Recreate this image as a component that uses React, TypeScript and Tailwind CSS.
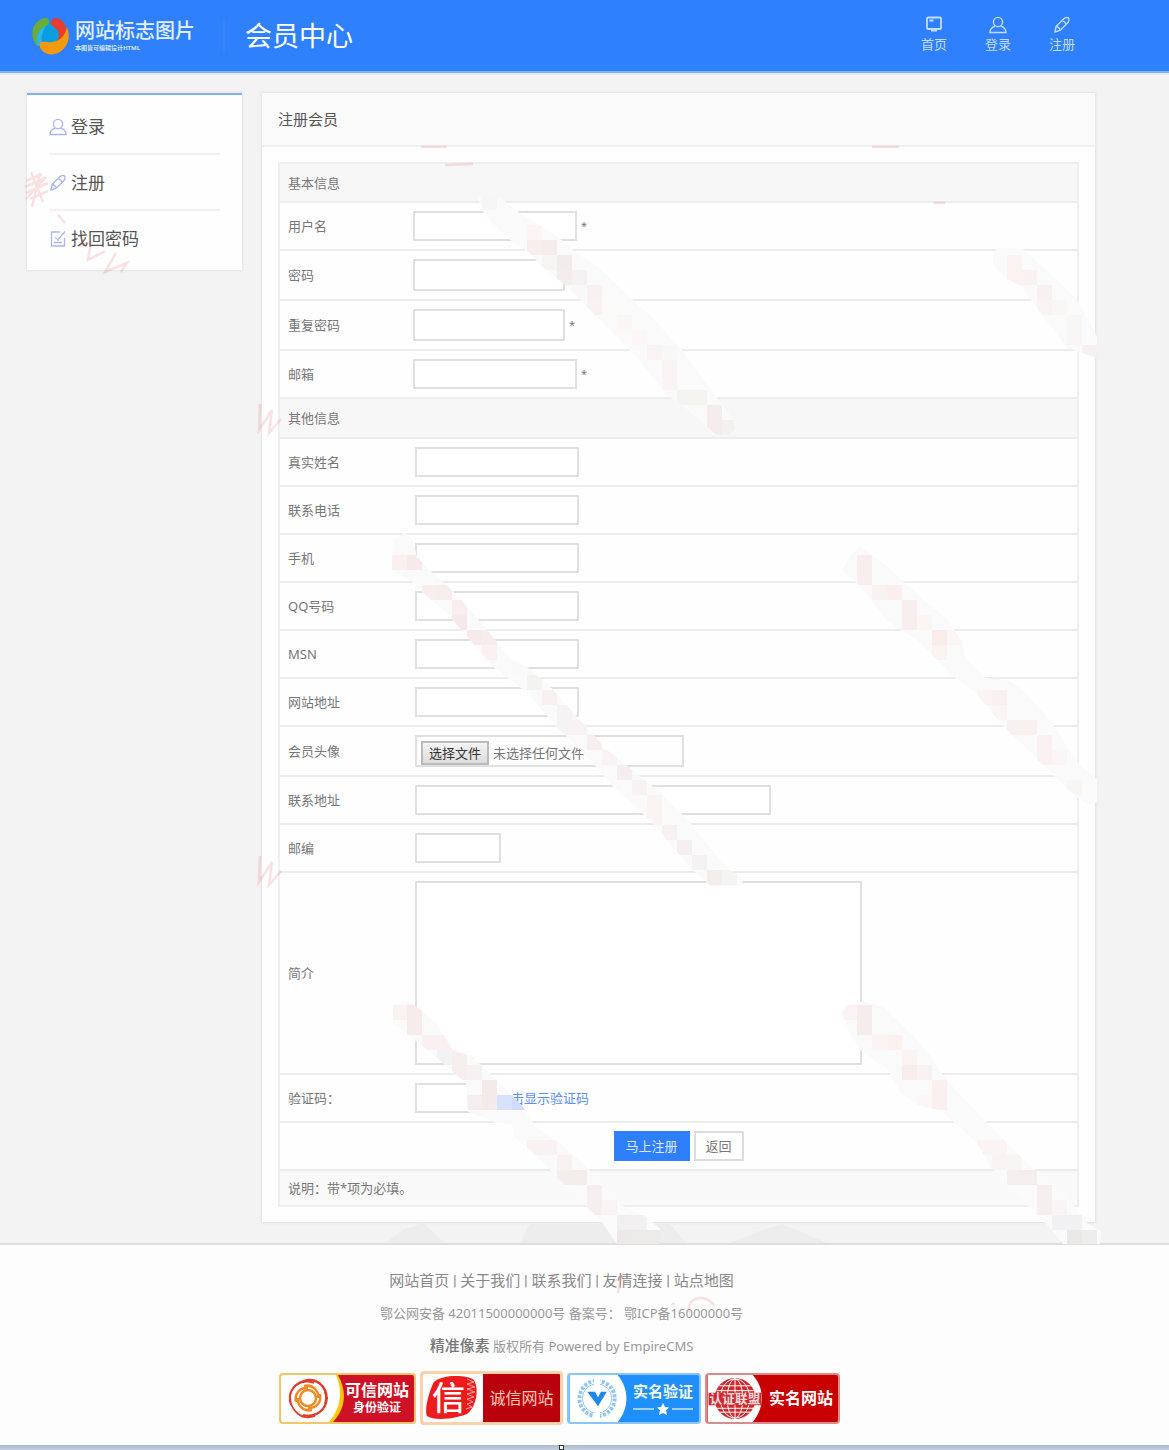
import type { ReactNode } from "react";

type IconProps = { className?: string };

const navLinks = [
  { label: "首页", icon: MonitorIcon },
  { label: "登录", icon: UserIcon },
  { label: "注册", icon: PenIcon },
];

const sideLinks = [
  { label: "登录", icon: UserIcon },
  { label: "注册", icon: PenIcon },
  { label: "找回密码", icon: NoteIcon },
];

const accountFields = [
  { id: "username", label: "用户名", type: "text", row: "h-12", input: "w-[164px] h-[30px]", required: true },
  { id: "password", label: "密码", type: "password", row: "h-[50px]", input: "w-[152px] h-8", required: false },
  { id: "repassword", label: "重复密码", type: "password", row: "h-[50px]", input: "w-[152px] h-8", required: true },
  { id: "email", label: "邮箱", type: "text", row: "h-12", input: "w-[164px] h-[30px]", required: true },
];

const contactFields = [
  { id: "truename", label: "真实姓名" },
  { id: "call", label: "联系电话" },
  { id: "phone", label: "手机" },
  { id: "oicq", label: "QQ号码" },
  { id: "msn", label: "MSN" },
  { id: "homepage", label: "网站地址" },
];

const footerLinks = ["网站首页", "关于我们", "联系我们", "友情连接", "站点地图"];

const inputBase = "block border-2 border-[#e0e0e0] bg-white px-1 text-[13px] outline-none";

function MonitorIcon({ className }: IconProps) {
  return (
    <svg viewBox="0 0 18 18" fill="none" stroke="currentColor" strokeWidth="1.8" className={className}>
      <rect x="2" y="1.500" width="14" height="11.500" rx="1" />
      <path d="M4.500 4.500h4M7.500 13v2M10.500 13v2M6 14.500h6" />
    </svg>
  );
}

function UserIcon({ className }: IconProps) {
  return (
    <svg viewBox="0 0 18 18" fill="none" stroke="currentColor" strokeWidth="1.4" className={className}>
      <circle cx="9" cy="6" r="4.6" />
      <path d="M6.2 10.2C3 11.2 1 13 1 16.500h16c0-3.500-2-5.300-5.200-6.300" />
    </svg>
  );
}

function PenIcon({ className }: IconProps) {
  return (
    <svg viewBox="0 0 18 18" fill="none" stroke="currentColor" strokeWidth="1.4" className={className}>
      <path d="M2 16l1-5.500 7.500-7.500c1.500-1.500 4-2 5-1s.5 3.500-1 5L7 14.500z" />
      <path d="M3 10.500c2 0 4 2 4 4M9.500 5c1.500.3 3 1.500 3.500 3" />
    </svg>
  );
}

function NoteIcon({ className }: IconProps) {
  return (
    <svg viewBox="0 0 18 18" fill="none" stroke="currentColor" strokeWidth="1.3" className={className}>
      <path d="M11 2H2.500v14h13V8" />
      <path d="M16 1.500l-7 8-3-2M5 12.500h8M9 9.500v1.500" />
    </svg>
  );
}

function LogoMark() {
  return (
    <svg viewBox="0 0 38 38" className="h-[38px] w-[38px]">
      <circle cx="18" cy="18" r="12" fill="#0a9de0" />
      <path d="M5 29C-4 18 1 3 13 1c5-1 6 6 1 8C7 12 4 18 6 28z" fill="#6aad35" />
      <path d="M6 29C3 20 6 12 14 9c-4 7-6 12-3 19z" fill="#29b7ee" />
      <path d="M19 5c1-5 7-5 11-1 7 7 6 15 1 21l-7 1c4-6 4-12-2-16-2-1-4-3-3-5z" fill="#e83c2c" />
      <path d="M8 26c4-3 7 0 12-1 8-1 13-6 15-15 5 12-1 24-12 27-8 2-17-4-15-11z" fill="#f39a0c" />
    </svg>
  );
}

function SectionRow({ children, className }: { children: ReactNode; className: string }) {
  return (
    <tr>
      <th
        colSpan={2}
        className={`border-b-2 border-[#ececec] bg-[#f7f7f7] pl-2 text-left font-normal ${className}`}
      >
        {children}
      </th>
    </tr>
  );
}

function FieldRow({ id, label, className = "h-12", children }: { id: string; label: string; className?: string; children: ReactNode }) {
  return (
    <tr>
      <td className={`border-b-2 border-[#ececec] pl-2 ${className}`}>
        <label htmlFor={id}>{label}</label>
      </td>
      <td className="border-b-2 border-[#ececec]">{children}</td>
    </tr>
  );
}

function TrustedBadge() {
  return (
    <a href="#" className="flex h-[51px] w-[137px] overflow-hidden rounded border-2 border-[#f3c667] bg-[#cf1126]">
      <svg viewBox="0 0 64 47" className="h-[47px] w-16 shrink-0">
        <path d="M0 0h57c9 16 8 33-5 47H0z" fill="#fac80a" />
        <path d="M0 0h55c7 16 5 33-7 47H0z" fill="#fff" />
        <g fill="none" stroke="#e03c2e" strokeWidth="1.800">
          <path d="M10 30C5 17 15 6 28 5M22 6c13-5 24 5 24 18M44 17c5 13-5 24-18 24M34 41C21 46 10 36 9 23" />
          <path d="M9 25C8 12 20 3 33 8M27 5c13 0 21 11 17 24M46 22c0 13-11 21-24 18" />
        </g>
        <g fill="none" stroke="#f08a24" strokeWidth="2.500">
          <circle cx="27" cy="23" r="8" />
          <path d="M15 27c-2-9 5-15 12-14M23 11c9-2 15 5 14 12M39 19c2 9-5 15-12 14M31 35c-9 2-15-5-14-12" />
        </g>
      </svg>
      <span className="flex flex-col items-center justify-center whitespace-nowrap text-white">
        <b className="text-[16px] leading-5">可信网站</b>
        <b className="text-[12px] leading-4">身份验证</b>
      </span>
    </a>
  );
}

function HonestBadge() {
  return (
    <a href="#" className="flex h-[54px] w-[143px] overflow-hidden rounded border-[3px] border-[#fcd0a8] bg-[#bb000d]">
      <svg viewBox="0 0 60 48" className="h-full w-[60px] shrink-0">
        <path d="M0 0h60v48H0z" fill="#fff" />
        <path d="M11 8C20 0 44 1 51 6c6 11 1 28-7 34-12 5-33 7-40 2-3-6 2-25 7-34z" fill="#ed1b1b" />
        <path
          d="M44 5l7 3-7 2 8 3-8 2 8 3-8 2 7 3-7 2 6 3-6 2 5 3-6 2"
          fill="none"
          stroke="#fff"
          strokeWidth="1"
          opacity=".6"
        />
        <text x="9" y="36" fontSize="33" fontWeight="500" fill="#fff">信</text>
      </svg>
      <span className="flex grow items-center justify-center whitespace-nowrap text-[16px] text-[#ffc9b8]">诚信网站</span>
    </a>
  );
}

function VerifiedBadge() {
  return (
    <a href="#" className="flex h-[51px] w-[134px] overflow-hidden rounded-sm border-2 border-[#8bc4fb] bg-[#1f90fb]">
      <svg viewBox="0 0 60 48" className="h-full w-[60px] shrink-0">
        <path d="M0 0h49c12 14 12 34 0 48H0z" fill="#fff" />
        <g fill="none" stroke="#8fc5f7">
          <circle cx="28" cy="24" r="18" strokeWidth="4" strokeDasharray="3 1.700" />
          <circle cx="28" cy="24" r="15" strokeWidth="1" />
        </g>
        <path d="M25 2h6v10h-6zM25 38h6v8h-6z" fill="#fff" />
        <path d="M18 17h8l3 6 3-6h6l-9 15z" fill="#1f87ea" />
      </svg>
      <span className="flex flex-col items-center whitespace-nowrap pl-1 text-white">
        <b className="pt-1 text-[15px] leading-6 text-[#f0fae8]">实名验证</b>
        <svg viewBox="0 0 60 12" className="h-3 w-[60px]">
          <path d="M0 6h21M39 6h21" stroke="#9dd0ff" strokeWidth="2" />
          <path d="M30 0l2 4 4 .500-3 3 1 4.500-4-2-4 2 1-4.500-3-3 4-.500z" fill="#fff" />
        </svg>
      </span>
    </a>
  );
}

function RealNameBadge() {
  return (
    <a href="#" className="flex h-[51px] w-[135px] overflow-hidden rounded-sm border-2 border-[#d88c8c] bg-[#c80000]">
      <svg viewBox="0 0 60 48" className="h-full w-[60px] shrink-0">
        <path d="M0 0h46c13 14 12 34 0 48H0z" fill="#fff" />
        <circle cx="28" cy="24" r="21" fill="#cf2a2f" />
        <g fill="none" stroke="#fff" strokeWidth="1">
          <ellipse cx="28" cy="24" rx="8" ry="20" />
          <ellipse cx="28" cy="24" rx="15" ry="20" />
          <path d="M28 3v42M12 11h32M9 16h38M9 34h38M12 38h32" />
        </g>
        <path d="M1 18h54v13H1z" fill="#cf2a2f" />
        <text x="2" y="29" fontSize="13" fontWeight="700" fill="#f8dada">认证联盟</text>
      </svg>
      <b className="flex items-center whitespace-nowrap pl-0.5 text-[16px] text-white">实名网站</b>
    </a>
  );
}

// Outline of each smudge, and the tinted 15px cells that fill it: "x,y,colour".
const smudges = [
  {
    outline:
      "477,197 492,194 505,201 520,213 535,222 562,240 573,250 602,270 633,300 655,320 682,350 700,375 712,390 732,418 735,428 730,435 717,435 705,425 690,412 667,395 637,358 625,345 590,310 565,285 540,265 530,253 510,240 495,226 484,214",
    cells:
      "482,195,f6f6f7 527,225,fcf5f4 527,240,f8eeee 542,240,f5ecec 542,255,f6f5f4 557,255,f2eded 557,270,f3eded 572,270,f5f2f4 572,285,f8f8f8 587,285,f8f0f1 587,300,faf1f1 602,300,fafaf8 617,315,fbf5f4 632,330,fcf6f6 647,345,faf3f3 662,345,f8f8f6 662,360,fbf4f4 662,375,fbf4f4 677,390,f4f4f2 692,390,f7f3f1 707,405,f5eded 707,420,f5eded 722,420,f3f2f1",
  },
  {
    outline:
      "993,255 998,247 1023,249 1052,275 1078,301 1097,336 1097,358 1082,353 1067,348 1042,315 1020,285 1007,279 993,265",
    cells:
      "1007,255,fbf2f2 1007,270,fbf2f2 1022,270,faf2f2 1037,285,f9f1f1 1037,300,f8f4f3 1052,300,faf6f5 1067,315,f8f7f6 1067,330,f8f7f6 1082,345,f6f1f0",
  },
  {
    outline:
      "394,540 405,532 413,540 417,557 430,570 452,590 473,613 493,637 510,658 527,667 547,683 580,720 607,750 630,768 660,792 690,822 712,850 730,870 745,880 738,886 712,887 690,868 653,823 613,787 593,763 557,727 527,693 493,667 470,640 447,613 423,593 410,580 392,570 392,557",
    cells:
      "392,555,faf0f0 407,555,f8eaea 422,585,f8eeee 437,585,f8eded 452,600,f9eded 452,615,f6e9e9 467,630,f5ebeb 482,630,f8eded 482,645,faf2f2 512,660,f9f9f9 527,675,f3f3f2 542,690,f9f0f0 557,705,f5f3f3 557,720,f5f3f3 572,720,f9f2f4 587,735,f7efef 602,750,f9f3f3 617,765,f4efee 632,780,f8f3f2 647,795,faf4f3 647,810,faf4f3 662,825,f8f1f1 677,840,f5efef 692,855,f5f3f2 707,870,f3eeec 722,870,f4f4f2",
  },
  {
    outline:
      "842,570 850,556 860,546 887,566 903,581 923,599 947,619 963,643 965,657 985,678 1008,680 1023,690 1050,720 1078,763 1097,779 1097,803 1087,805 1067,789 1037,759 1003,726 977,694 955,678 937,660 918,641 887,621 870,599 857,583",
    cells:
      "857,555,f9eeee 857,570,f9eeee 872,585,f9f2f2 887,585,faefee 902,600,f8eeee 902,615,f8eeee 917,615,fbf5f4 932,630,f9eceb 932,645,faf3f2 947,630,fbf6f5 977,690,fbf4f4 992,690,f9f1f1 992,705,f9f5f4 1007,720,f8f1f0 1022,720,f9f0f0 1037,735,faf1f1 1037,750,faf1f1 1052,750,faf6f5 1067,780,f9f5f3",
  },
  {
    outline:
      "393,1005 407,1001 417,1007 437,1023 453,1050 473,1057 497,1080 523,1107 537,1128 560,1143 590,1170 622,1205 643,1215 660,1228 663,1238 658,1244 617,1244 600,1220 557,1177 530,1150 513,1137 512,1125 497,1123 468,1112 466,1083 437,1058 417,1042 393,1023",
    cells:
      "392,1005,faf3f2 407,1005,f7ecec 407,1020,f7ecec 422,1035,faf0f1 437,1035,faf0f1 437,1050,f4f3f3 452,1050,f7efee 452,1065,f7efee 467,1065,f6f2f1 467,1095,f5eeee 482,1080,f5eaea 482,1095,f5eaea 497,1095,d8e2fc 512,1095,cfdcfc 527,1140,faf2f2 542,1140,faf2f2 557,1155,f9f2f2 557,1170,f5ecec 572,1170,f5ecec 587,1185,f6efef 587,1200,f6efef 602,1200,faf3f3 617,1215,f1f0ef 632,1215,f1f1f1 617,1230,ece9e8 632,1230,ecebea 647,1230,ecebea",
  },
  {
    outline:
      "842,1013 847,1005 863,1001 885,1008 913,1035 930,1055 943,1075 962,1097 977,1112 1007,1143 1033,1168 1070,1200 1087,1223 1102,1232 1100,1244 1063,1244 1050,1228 990,1167 977,1143 940,1110 918,1105 900,1092 888,1070 858,1048 848,1030",
    cells:
      "842,1005,fbf3f3 857,1005,f7ecec 857,1020,f7ecec 872,1005,fafaf8 872,1035,faf3f3 887,1035,fbf1ef 902,1050,fbf4f2 902,1065,f8edec 917,1065,f9f2f2 917,1095,faf7f6 932,1080,fbefef 932,1095,fbefef 962,1110,fafafa 977,1140,fbf4f3 992,1140,fbf4f3 992,1155,f9f4f4 1007,1155,f9f4f4 1007,1170,f5eeee 1022,1170,f5eeee 1037,1185,f5eff0 1037,1200,f5eff0 1052,1200,f9f5f5 1052,1215,f1f0f2 1067,1215,f1f0f2 1067,1230,ece8e7 1082,1230,ededec",
  },
];

function Watermark() {
  return (
    <svg width="1169" height="1330" className="pointer-events-none absolute left-0 top-0" aria-hidden="true">
      <g fill="#e9e9e9" opacity=".6">
        <path d="M385 1243l20-14 18-6 22 20zM520 1243l10-19h140l16 19zM730 1243l30-12 22-7 45 19z" />
      </g>
      {smudges.map((smudge, i) => (
        <g key={i} clipPath={`url(#smudge-${i})`}>
          <clipPath id={`smudge-${i}`}>
            <polygon points={smudge.outline} />
          </clipPath>
          <polygon points={smudge.outline} fill="#fafafa" />
          {smudge.cells.split(" ").map((cell) => {
            const [x, y, color] = cell.split(",");
            return <rect key={cell} x={x} y={y} width="15" height="15" fill={`#${color}`} shapeRendering="crispEdges" />;
          })}
        </g>
      ))}
      <g fill="none" stroke="#e05050" strokeWidth="2.500" opacity=".16">
        <path d="M26 181l16-7M25 187l20-9M26 193l22-10M30 199l18-8M31 172l12 30M40 173l-8 34M26 199l20-22" />
        <path d="M58 215l7 8M79 246l12-4-3 18 17-9M116 253l-11 19 22-9-6 9" />
        <path d="M260 404l-1 26 13-20-3 23 12-14M260 856l-1 26 13-20-3 23 12-14" />
        <path d="M445 165l28-1M421 147h26M872 147h27M934 203h11" />
        <path d="M612 1281l12-2M622 1273l-4 20M672 1304h3M690 1313c-6-14 14-21 24-8" />
      </g>
    </svg>
  );
}

export default function App() {
  return (
    <div className="relative bg-[#f3f3f3] font-['Noto_Sans','Noto_Sans_CJK_SC',sans-serif] text-[13px] leading-5 text-[#777]">
      {/* Top bar */}
      <header className="border-b-2 border-[#7fb2fb] bg-[#2f80fd] text-white shadow-[0_2px_0_#e2eaf5]">
        <div className="ml-8 mr-[75px] flex h-[71px] items-center">
          <a href="#" className="flex items-center gap-[5px]">
            <LogoMark />
            <span className="flex flex-col">
              <span className="text-[20px] font-medium leading-6 text-[#e3efff]">网站标志图片</span>
              <span className="text-[6px] font-bold leading-[10px] text-[#d3e3ff]">本图皆可编辑设计HTML</span>
            </span>
          </a>
          <h1 className="ml-7 flex h-8 items-center border-l-2 border-[#3e83ee] pl-5 text-[27px] leading-8">会员中心</h1>
          <nav className="ml-auto flex pb-0.5">
            {navLinks.map(({ label, icon: Icon }, i) => (
              <a key={i} href="#" className="flex w-16 flex-col items-center text-[#c4dbff]">
                <Icon className="h-[18px] w-[18px]" />
                {label}
              </a>
            ))}
          </nav>
        </div>
      </header>

      <div className="ml-[27px] mr-[74px] flex items-start gap-5 pb-[21px] pt-5">
        {/* Left menu */}
        <aside className="w-[215px] shrink-0 border-t-2 border-[#7fb2f8] bg-[#fefefe] px-[22px] pb-[3px] pt-1 shadow-[0_0_2px_1px_#e6e6e6]">
          {sideLinks.map(({ label, icon: Icon }, i) => (
            <a
              key={i}
              href="#"
              className="flex h-14 items-center gap-1 border-b-2 border-[#f2f2f2] pt-0.5 text-[17px] text-[#555] last:border-b-0 last:pt-0"
            >
              <Icon className="h-[18px] w-[18px] text-[#a9b6fb]" />
              {label}
            </a>
          ))}
        </aside>

        {/* Registration form */}
        <main className="min-w-0 grow bg-[#fefefe] shadow-[0_0_2px_1px_#e4e4e4]">
          <h2 className="flex h-[54px] items-center border-b-2 border-[#f0f0f0] bg-[#fafafa] px-4 text-[15px] text-[#555]">
            注册会员
          </h2>
          <form className="px-4 pb-[15px] pt-[15px]" onSubmit={(e) => e.preventDefault()}>
            <div className="border-2 border-[#efefef]">
              <table className="w-full table-fixed border-separate border-spacing-0">
                <colgroup>
                  <col className="w-[133px]" />
                  <col />
                </colgroup>
                <tbody>
                  <SectionRow className="h-[39px]">基本信息</SectionRow>
                  {accountFields.map((field) => (
                    <FieldRow key={field.id} id={field.id} label={field.label} className={field.row}>
                      <div className="flex items-center gap-1">
                        <input id={field.id} type={field.type} className={`${inputBase} ${field.input}`} />
                        {field.required && <span className="text-[11px]">*</span>}
                      </div>
                    </FieldRow>
                  ))}
                </tbody>
              </table>

              <table className="w-full table-fixed border-separate border-spacing-0">
                <colgroup>
                  <col className="w-[135px]" />
                  <col />
                </colgroup>
                <tbody>
                  <SectionRow className="h-10">其他信息</SectionRow>
                  {contactFields.map((field) => (
                    <FieldRow key={field.id} id={field.id} label={field.label}>
                      <input id={field.id} type="text" className={`${inputBase} h-[30px] w-[164px]`} />
                    </FieldRow>
                  ))}
                  <FieldRow id="userpic" label="会员头像" className="h-[50px]">
                    <label className="relative flex h-8 w-[269px] items-center gap-1 border-2 border-[#e0e0e0] pl-1 pt-1">
                      <input id="userpic" type="file" className="sr-only" />
                      <span className="flex h-6 w-[68px] items-center justify-center border-2 border-[#bbb] bg-linear-to-b from-[#f4f4f4] to-[#dcdcdc] text-[#333]">
                        选择文件
                      </span>
                      <span>未选择任何文件</span>
                    </label>
                  </FieldRow>
                  <FieldRow id="address" label="联系地址">
                    <input id="address" type="text" className={`${inputBase} h-[30px] w-[356px]`} />
                  </FieldRow>
                  <FieldRow id="zip" label="邮编">
                    <input id="zip" type="text" className={`${inputBase} h-[30px] w-[86px]`} />
                  </FieldRow>
                  <FieldRow id="saytext" label="简介" className="h-[202px]">
                    <textarea id="saytext" className={`${inputBase} h-[184px] w-[447px] resize-none`} />
                  </FieldRow>
                  <FieldRow id="key" label="验证码：">
                    <div className="flex items-center gap-[15px]">
                      <input id="key" type="text" className={`${inputBase} h-[30px] w-[68px]`} />
                      <a href="#" className="text-[#5c8ff8]">
                        点击显示验证码
                      </a>
                    </div>
                  </FieldRow>
                  <tr>
                    <td colSpan={2} className="h-12 border-b-2 border-[#ececec]">
                      <div className="flex justify-center gap-1">
                        <button type="submit" className="h-[30px] w-[76px] bg-[#2f7ffb] text-[#dbe8ff]">
                          马上注册
                        </button>
                        <button type="button" className="h-[30px] w-[50px] border-2 border-[#dcdcdc] bg-white text-[#777]">
                          返回
                        </button>
                      </div>
                    </td>
                  </tr>
                  <tr>
                    <td colSpan={2} className="h-[34px] bg-[#f9f9f9] pl-2">
                      说明：带*项为必填。
                    </td>
                  </tr>
                </tbody>
              </table>
            </div>
          </form>
        </main>
      </div>

      <footer className="border-t-2 border-[#dedede] bg-[#fdfdfd]">
        <div className="ml-[27px] mr-[73px] flex flex-col items-center pb-5 pt-5 text-[#999]">
          <nav className="h-8 font-['Roboto','Noto_Sans_CJK_SC',sans-serif] text-[15px] leading-8 text-[#888]">
            {footerLinks.map((label, i) => (
              <span key={label}>
                {i > 0 && " | "}
                <a href="#">{label}</a>
              </span>
            ))}
          </nav>
          <p className="leading-8">鄂公网安备 42011500000000号 备案号： 鄂ICP备16000000号</p>
          <p className="leading-8">
            <b className="text-[15px] font-medium text-[#777]">精准像素</b> 版权所有 Powered by EmpireCMS
          </p>
          <div className="mt-[9px] flex items-center gap-1 pr-1">
            <TrustedBadge />
            <HonestBadge />
            <VerifiedBadge />
            <RealNameBadge />
          </div>
        </div>
        <div className="flex h-[5px] justify-center bg-linear-to-b from-[#a9b9cc] to-[#c6d2e0] pr-[46px]">
          <span className="h-[5px] w-[5px] border border-[#333] bg-white" />
        </div>
      </footer>

      <Watermark />
    </div>
  );
}
